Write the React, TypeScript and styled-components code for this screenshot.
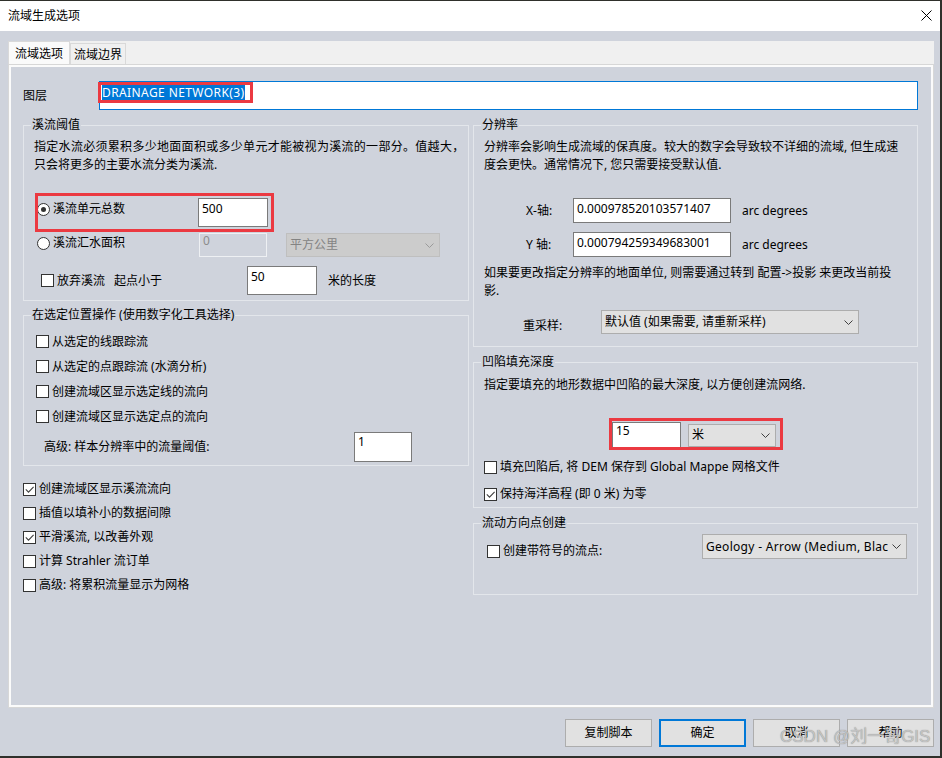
import React from "react";
import styled, { createGlobalStyle, css } from "styled-components";

// --- Global ---

const GlobalStyle = createGlobalStyle`
  html, body {
    margin: 0;
    padding: 0;
  }
  body {
    width: 942px;
    height: 758px;
    overflow: hidden;
    background: #2f302b;
    font-family: "Noto Sans", "Noto Sans CJK SC", sans-serif;
    font-size: 12px;
    color: #000;
  }
  *, *::before, *::after {
    box-sizing: border-box;
  }
`;

// --- Window chrome ---

const Window = styled.div`
  position: relative;
  width: 940px;
  height: 755px;
  margin-top: 1px;
  background: #cfd3dc;
  display: flex;
  flex-direction: column;
`;

const TitleBar = styled.div`
  flex: none;
  height: 30px;
  background: #fff;
  display: flex;
  align-items: center;
  justify-content: space-between;
  padding: 0 8px 1px 8px;
  line-height: 18px;
`;

const TabStrip = styled.div`
  display: flex;
  align-items: flex-end;
  height: 24px;
  margin: 10px 6px 0 8px;
  background: #f0f0f0;
`;

const Tab = styled.div<{ $active?: boolean }>`
  display: flex;
  align-items: center;
  justify-content: center;
  width: ${(p) => (p.$active ? 62 : 56)}px;
  height: ${(p) => (p.$active ? 24 : 22)}px;
  border: 1px solid #d9d9d9;
  border-bottom: none;
  background: ${(p) => (p.$active ? "#fafafa" : "#f0f0f0")};
  line-height: 16px;
`;

const Panel = styled.div`
  height: 642px;
  margin: 0 7px 0 9px;
  border: 2px solid #fbfbfb;
  box-shadow: 0 0 0 1px #d7d7d7;
  display: flex;
  flex-direction: column;
`;

// --- Layer row ---

const LayerRow = styled.div`
  display: flex;
  align-items: center;
  margin: 14px 0 0 12px;
`;

const LayerLabel = styled.span`
  width: 76px;
  line-height: 18px;
`;

const LayerInput = styled.div`
  width: 819px;
  height: 29px;
  background: #fff;
  border: 1px solid #0078d7;
  padding: 3px 2px;
  display: flex;
  align-items: flex-start;
`;

const Selected = styled.span`
  position: relative;
  display: inline-block;
  height: 15px;
  line-height: 15px;
  padding-right: 1px;
  background: #0078d7;
  color: #fff;
  letter-spacing: 0.4px;
  white-space: nowrap;

  &::after {
    content: "";
    position: absolute;
    top: -3px;
    left: -4px;
    right: -8px;
    bottom: -3px;
    border: 3px solid #eb3941;
  }
`;

// --- Groups ---

const Columns = styled.div`
  display: grid;
  grid-template-columns: 446px 445px;
  column-gap: 4px;
  align-items: start;
  margin: 15px 0 0 12px;
`;

const Column = styled.div`
  display: flex;
  flex-direction: column;
`;

const Group = styled.div<{ $mt?: number; $pb?: number }>`
  display: flex;
  flex-direction: column;
  margin-top: ${(p) => p.$mt ?? 0}px;
  padding-bottom: ${(p) => p.$pb ?? 0}px;
  border: 1px solid #e3e6eb;
`;

const GroupTitle = styled.div`
  align-self: flex-start;
  margin: -9px 0 0 7px;
  padding: 0 1px;
  height: 16px;
  line-height: 16px;
  background: #cfd3dc;
  white-space: nowrap;
`;

const Desc = styled.div<{ $mt: number }>`
  margin: ${(p) => p.$mt}px 0 0 10px;
  line-height: 18px;
  white-space: nowrap;
`;

const Stretch = styled.span`
  letter-spacing: 0.3px;
`;

const Row = styled.div<{
  $mt: number;
  $ml: number;
  $h: number;
  $align?: string;
  $mark?: string;
}>`
  display: flex;
  align-self: flex-start;
  align-items: ${(p) => p.$align ?? "center"};
  height: ${(p) => p.$h}px;
  margin: ${(p) => p.$mt}px 0 0 ${(p) => p.$ml}px;

  ${(p) =>
    p.$mark &&
    css`
      position: relative;
      &::after {
        content: "";
        position: absolute;
        inset: ${p.$mark};
        border: 3px solid #eb3941;
        pointer-events: none;
      }
    `}
`;

const Lead = styled.div<{ $w: number; $h?: number; $mt?: number }>`
  flex: none;
  display: flex;
  align-items: center;
  gap: 3px;
  width: ${(p) => p.$w}px;
  height: ${(p) => (p.$h ? `${p.$h}px` : "auto")};
  margin-top: ${(p) => p.$mt ?? 0}px;
`;

const Text = styled.span<{ $ml?: number; $mt?: number }>`
  line-height: 18px;
  white-space: nowrap;
  margin-left: ${(p) => p.$ml ?? 0}px;
  margin-top: ${(p) => p.$mt ?? 0}px;
`;

const Spacer = styled.span<{ $w: number }>`
  display: inline-block;
  width: ${(p) => p.$w}px;
`;

const TextBox = styled.div<{
  $w: number;
  $h: number;
  $pt?: number;
  $lh?: number;
  $disabled?: boolean;
}>`
  flex: none;
  width: ${(p) => p.$w}px;
  height: ${(p) => p.$h}px;
  padding: ${(p) => p.$pt ?? 1}px 3px 0;
  line-height: ${(p) => p.$lh ?? 18}px;
  background: ${(p) => (p.$disabled ? "transparent" : "#fff")};
  border: 1px solid ${(p) => (p.$disabled ? "#eef0f3" : "#7a7a7a")};
  color: ${(p) => (p.$disabled ? "#8c8c8c" : "#000")};
  white-space: nowrap;
`;

const Select = styled.div<{
  $w: number;
  $h: number;
  $ml?: number;
  $disabled?: boolean;
}>`
  flex: none;
  display: flex;
  align-items: center;
  gap: 4px;
  width: ${(p) => p.$w}px;
  height: ${(p) => p.$h}px;
  margin-left: ${(p) => p.$ml ?? 0}px;
  padding: 0 5px 0 3px;
  background: ${(p) => (p.$disabled ? "#cccccc" : "#e1e1e1")};
  border: 1px solid ${(p) => (p.$disabled ? "#bfbfbf" : "#adadad")};
  color: ${(p) => (p.$disabled ? "#838383" : "#000")};
  line-height: 18px;
`;

const SelectText = styled.span<{ $ls?: number }>`
  flex: 1;
  min-width: 0;
  overflow: hidden;
  white-space: nowrap;
  letter-spacing: ${(p) => p.$ls ?? 0}px;
`;

const CheckLine = styled.div<{ $mt?: number; $ml?: number; $h: number }>`
  display: flex;
  align-items: center;
  gap: 3px;
  height: ${(p) => p.$h}px;
  margin: ${(p) => p.$mt ?? 0}px 0 0 ${(p) => p.$ml ?? 0}px;
`;

const Box = styled.span`
  flex: none;
  width: 13px;
  height: 13px;
  border: 1px solid #333;
  background: #fff;
  display: flex;
  align-items: center;
  justify-content: center;
`;

const RadioRing = styled(Box)`
  border-radius: 50%;
`;

const RadioDot = styled.span`
  width: 5px;
  height: 5px;
  border-radius: 50%;
  background: #333;
`;

// --- Bottom buttons ---

const ButtonBar = styled.div`
  display: flex;
  justify-content: flex-end;
  gap: 7px;
  margin: 12px 6px 0 0;
`;

const Button = styled.div<{ $primary?: boolean }>`
  width: 87px;
  height: 28px;
  display: flex;
  align-items: center;
  justify-content: center;
  background: #e1e1e1;
  border: ${(p) => (p.$primary ? "2px solid #0078d7" : "1px solid #adadad")};
  line-height: 18px;
`;

const Watermark = styled.div`
  position: absolute;
  left: 780px;
  top: 725px;
  font-family: "Liberation Sans", "Noto Sans CJK SC", sans-serif;
  font-size: 17px;
  line-height: 22px;
  color: rgba(206, 206, 206, 0.85);
  text-shadow: 0 0 1px rgba(110, 110, 110, 0.9);
  white-space: nowrap;
  pointer-events: none;
`;

// --- small drawings ---

const CloseIcon = () => (
  <svg width="11" height="11" viewBox="0 0 11 11">
    <path d="M0.5 0.5 L10.5 10.5 M10.5 0.5 L0.5 10.5" stroke="#000" strokeWidth="1" />
  </svg>
);

const Chevron = ({ color = "#404040" }: { color?: string }) => (
  <svg width="9" height="5" viewBox="0 0 9 5" style={{ flex: "none" }}>
    <path d="M0.5 0.5 L4.5 4.5 L8.5 0.5" fill="none" stroke={color} strokeWidth="1" />
  </svg>
);

const Check = ({ checked }: { checked?: boolean }) => (
  <Box>
    {checked && (
      <svg width="11" height="11" viewBox="0 0 11 11">
        <path d="M1.8 5.4 L4.5 8.1 L9.6 2.8" fill="none" stroke="#404040" strokeWidth="1.1" />
      </svg>
    )}
  </Box>
);

const Radio = ({ checked }: { checked?: boolean }) => (
  <RadioRing>{checked && <RadioDot />}</RadioRing>
);

// --- MAIN ---

export default function App() {
  return (
    <>
      <GlobalStyle />
      <Window>
        <TitleBar>
          <span>流域生成选项</span>
          <CloseIcon />
        </TitleBar>

        <TabStrip>
          <Tab $active>流域选项</Tab>
          <Tab>流域边界</Tab>
        </TabStrip>

        <Panel>
          <LayerRow>
            <LayerLabel>图层</LayerLabel>
            <LayerInput>
              <Selected>DRAINAGE NETWORK(3)</Selected>
            </LayerInput>
          </LayerRow>

          <Columns>
            {/* LEFT */}
            <Column>
              <Group $pb={5}>
                <GroupTitle>溪流阈值</GroupTitle>
                <Desc $mt={5}>
                  <Stretch>指定水流必须累积多少地面面积或多少单元才能被视为溪流的一部分。值越大，</Stretch>
                  <br />
                  只会将更多的主要水流分类为溪流.
                </Desc>

                <Row $mt={24} $ml={13} $h={29} $align="flex-start" $mark="-5px -6px -5px -2px">
                  <Lead $w={161} $h={22}>
                    <Radio checked />
                    <Text>溪流单元总数</Text>
                  </Lead>
                  <TextBox $w={70} $h={29}>500</TextBox>
                </Row>

                <Row $mt={6} $ml={13} $h={24} $align="flex-start">
                  <Lead $w={162} $h={20}>
                    <Radio />
                    <Text>溪流汇水面积</Text>
                  </Lead>
                  <TextBox $w={68} $h={24} $pt={0} $lh={14} $disabled>
                    0
                  </TextBox>
                  <Select $w={154} $h={24} $ml={19} $disabled>
                    <SelectText>平方公里</SelectText>
                    <Chevron color="#9a9a9a" />
                  </Select>
                </Row>

                <Row $mt={9} $ml={17} $h={29}>
                  <Lead $w={206}>
                    <Check />
                    <Text>
                      放弃溪流
                      <Spacer $w={9} />
                      起点小于
                    </Text>
                  </Lead>
                  <TextBox $w={70} $h={29}>50</TextBox>
                  <Text $ml={11}>米的长度</Text>
                </Row>
              </Group>

              <Group $mt={14} $pb={3}>
                <GroupTitle>在选定位置操作 (使用数字化工具选择)</GroupTitle>
                <CheckLine $mt={6} $ml={12} $h={25}>
                  <Check />
                  <Text>从选定的线跟踪流</Text>
                </CheckLine>
                <CheckLine $ml={12} $h={25}>
                  <Check />
                  <Text>从选定的点跟踪流 (水滴分析)</Text>
                </CheckLine>
                <CheckLine $ml={12} $h={25}>
                  <Check />
                  <Text>创建流域区显示选定线的流向</Text>
                </CheckLine>
                <CheckLine $ml={12} $h={25}>
                  <Check />
                  <Text>创建流域区显示选定点的流向</Text>
                </CheckLine>
                <Row $mt={3} $ml={20} $h={30}>
                  <Lead $w={310}>
                    <Text>高级: 样本分辨率中的流量阈值:</Text>
                  </Lead>
                  <TextBox $w={58} $h={30} $pt={0}>
                    1
                  </TextBox>
                </Row>
              </Group>

              <CheckLine $mt={11} $h={24}>
                <Check checked />
                <Text>创建流域区显示溪流流向</Text>
              </CheckLine>
              <CheckLine $h={24}>
                <Check />
                <Text>插值以填补小的数据间隙</Text>
              </CheckLine>
              <CheckLine $h={24}>
                <Check checked />
                <Text>平滑溪流, 以改善外观</Text>
              </CheckLine>
              <CheckLine $h={24}>
                <Check />
                <Text>计算 Strahler 流订单</Text>
              </CheckLine>
              <CheckLine $h={24}>
                <Check />
                <Text>高级: 将累积流量显示为网格</Text>
              </CheckLine>
            </Column>

            {/* RIGHT */}
            <Column>
              <Group $pb={12}>
                <GroupTitle>分辨率</GroupTitle>
                <Desc $mt={5}>
                  分辨率会影响生成流域的保真度。较大的数字会导致较不详细的流域, 但生成速
                  <br />
                  度会更快。通常情况下, 您只需要接受默认值.
                </Desc>

                <Row $mt={24} $ml={52} $h={25}>
                  <Lead $w={47}>
                    <Text>X-轴:</Text>
                  </Lead>
                  <TextBox $w={158} $h={25}>0.000978520103571407</TextBox>
                  <Text $ml={11}>arc degrees</Text>
                </Row>
                <Row $mt={9} $ml={52} $h={25}>
                  <Lead $w={47}>
                    <Text>Y 轴:</Text>
                  </Lead>
                  <TextBox $w={158} $h={25}>0.000794259349683001</TextBox>
                  <Text $ml={11}>arc degrees</Text>
                </Row>

                <Desc $mt={7}>
                  如果要更改指定分辨率的地面单位, 则需要通过转到 配置-&gt;投影 来更改当前投
                  <br />
                  影.
                </Desc>

                <Row $mt={10} $ml={49} $h={24} $align="flex-start">
                  <Lead $w={78} $mt={7}>
                    <Text>重采样:</Text>
                  </Lead>
                  <Select $w={258} $h={24}>
                    <SelectText>默认值 (如果需要, 请重新采样)</SelectText>
                    <Chevron />
                  </Select>
                </Row>
              </Group>

              <Group $mt={15} $pb={1}>
                <GroupTitle>凹陷填充深度</GroupTitle>
                <Desc $mt={6}>指定要填充的地形数据中凹陷的最大深度, 以方便创建流网络.</Desc>

                <Row $mt={28} $ml={138} $h={26} $mark="-4px -7px -2px -3px">
                  <TextBox $w={69} $h={26} $pt={0} $lh={16}>
                    15
                  </TextBox>
                  <Select $w={88} $h={23} $ml={7}>
                    <SelectText>米</SelectText>
                    <Chevron />
                  </Select>
                </Row>

                <CheckLine $mt={7} $ml={10} $h={24}>
                  <Check />
                  <Text>填充凹陷后, 将 DEM 保存到 Global Mappe 网格文件</Text>
                </CheckLine>
                <CheckLine $mt={3} $ml={10} $h={24}>
                  <Check checked />
                  <Text>保持海洋高程 (即 0 米) 为零</Text>
                </CheckLine>
              </Group>

              <Group $mt={15} $pb={35}>
                <GroupTitle>流动方向点创建</GroupTitle>
                <Row $mt={3} $ml={13} $h={25} $align="flex-start">
                  <Lead $w={215} $h={18} $mt={8}>
                    <Check />
                    <Text>创建带符号的流点:</Text>
                  </Lead>
                  <Select $w={205} $h={25}>
                    <SelectText $ls={0.3}>Geology - Arrow (Medium, Black)</SelectText>
                    <Chevron />
                  </Select>
                </Row>
              </Group>
            </Column>
          </Columns>
        </Panel>

        <ButtonBar>
          <Button>复制脚本</Button>
          <Button $primary>确定</Button>
          <Button>取消</Button>
          <Button>帮助</Button>
        </ButtonBar>

        <Watermark>CSDN @刘一哥GIS</Watermark>
      </Window>
    </>
  );
}
